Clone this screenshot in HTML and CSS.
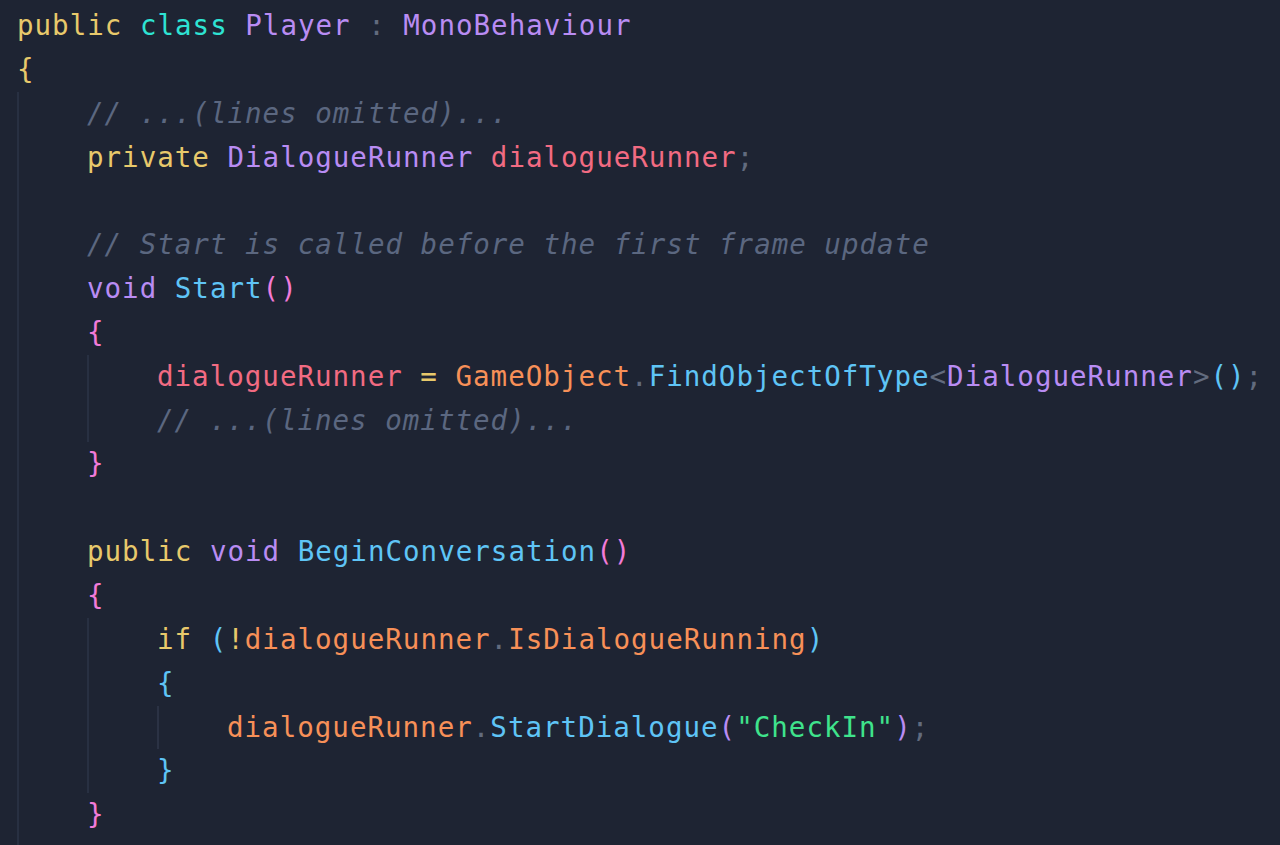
FILE: index.html
```html
<!DOCTYPE html>
<html>
<head>
<meta charset="utf-8">
<link rel="stylesheet" href="styles.css">
</head>
<body>
<div class="editor">
  <div class="ln"><span class="kw">public</span> <span class="cls">class</span> <span class="ty">Player</span> <span class="pn">:</span> <span class="ty">MonoBehaviour</span></div>
  <div class="ln"><span class="b1">{</span></div>
  <div class="block outer">
    <div class="ln"><span class="cm">// ...(lines omitted)...</span></div>
    <div class="ln"><span class="kw">private</span> <span class="ty">DialogueRunner</span> <span class="fld">dialogueRunner</span><span class="pn">;</span></div>
    <div class="ln"> </div>
    <div class="ln"><span class="cm">// Start is called before the first frame update</span></div>
    <div class="ln"><span class="ty">void</span> <span class="fn">Start</span><span class="b2">()</span></div>
    <div class="ln"><span class="b2">{</span></div>
    <div class="block">
      <div class="ln"><span class="fld">dialogueRunner</span> <span class="kw">=</span> <span class="obj">GameObject</span><span class="pn">.</span><span class="fn">FindObjectOfType</span><span class="pn">&lt;</span><span class="ty">DialogueRunner</span><span class="pn">&gt;</span><span class="b3">()</span><span class="pn">;</span></div>
      <div class="ln"><span class="cm">// ...(lines omitted)...</span></div>
    </div>
    <div class="ln"><span class="b2">}</span></div>
    <div class="ln"> </div>
    <div class="ln"><span class="kw">public</span> <span class="ty">void</span> <span class="fn">BeginConversation</span><span class="b2">()</span></div>
    <div class="ln"><span class="b2">{</span></div>
    <div class="block">
      <div class="ln"><span class="kw">if</span> <span class="b3">(</span><span class="kw">!</span><span class="obj">dialogueRunner</span><span class="pn">.</span><span class="obj">IsDialogueRunning</span><span class="b3">)</span></div>
      <div class="ln"><span class="b3">{</span></div>
      <div class="block inner">
        <div class="ln"><span class="obj">dialogueRunner</span><span class="pn">.</span><span class="fn">StartDialogue</span><span class="b4">(</span><span class="str">"CheckIn"</span><span class="b4">)</span><span class="pn">;</span></div>
      </div>
      <div class="ln"><span class="b3">}</span></div>
    </div>
    <div class="ln"><span class="b2">}</span></div>
    <div class="ln"> </div>
  </div>
</div>
</body>
</html>
```

FILE: styles.css
```css
html, body {
  margin: 0;
  padding: 0;
  background: #1e2433;
  height: 100%;
  overflow: hidden;
}

.editor {
  padding: 4px 0 0 17px;
  font-family: "DejaVu Sans Mono", "Liberation Mono", monospace;
  font-size: 27.5px;
  letter-spacing: 1px;
  line-height: 43.85px;
  color: #c8d0e0;
}

.ln {
  white-space: pre;
  height: 43.85px;
}

.block {
  border-left: 2px solid #283042;
  padding-left: 68px;
  margin-left: 0;
}

.block.inner {
  border-left-color: #2b3244;
}

.kw  { color: #e8c96b; }
.cls { color: #2ee3d3; }
.ty  { color: #b98cf3; }
.pn  { color: #626b7e; }
.cm  { color: #5b6780; font-style: italic; }
.fld { color: #f26b82; }
.obj { color: #f79058; }
.fn  { color: #5fc4f6; }
.str { color: #3fe38c; }
.b1  { color: #e8c96b; }
.b2  { color: #f27bd9; }
.b3  { color: #5fc4f6; }
.b4  { color: #b98cf3; }
```
